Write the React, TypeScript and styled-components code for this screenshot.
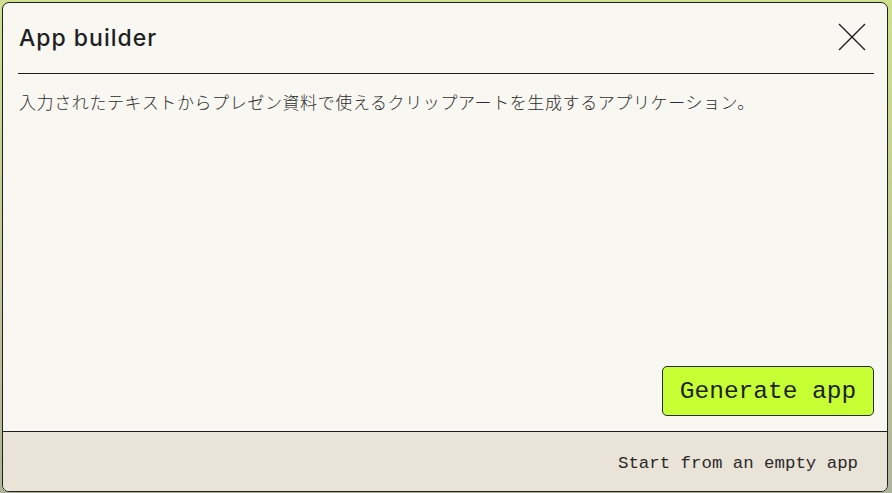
import React from "react";
import styled, { createGlobalStyle } from "styled-components";

const GlobalStyle = createGlobalStyle`
	html, body {
		margin: 0;
		padding: 0;
		background: #cfe08e;
		overflow: hidden;
	}
	* {
		box-sizing: border-box;
	}
`;

const PageSC = styled.div`
	width: 892px;
	height: 493px;
	padding: 2px 4px 0 2px;
	background: linear-gradient(#cfe08e, #aeb49a);
`;

const DialogSC = styled.div`
	width: 886px;
	height: 490px;
	display: flex;
	flex-direction: column;
	background: #f8f7f2;
	border: 1px solid #1f1f1f;
	border-radius: 7px;
	overflow: hidden;
`;

const HeaderSC = styled.div`
	height: 71px;
	margin: 0 13px 0 15px;
	display: flex;
	align-items: center;
	justify-content: space-between;
	border-bottom: 1px solid #1f1f1f;
`;

const TitleSC = styled.h2`
	margin: 0 0 0 1px;
	font-family: Inter, "Noto Sans", sans-serif;
	font-size: 23px;
	font-weight: 500;
	letter-spacing: 1px;
	color: #1f1f1f;
`;

const CloseSC = styled.button`
	width: 30px;
	height: 30px;
	margin: 0 7px 2px 0;
	padding: 0;
	border: none;
	background: none;
	display: flex;
	align-items: center;
	justify-content: center;
	cursor: pointer;
`;

const BodySC = styled.div`
	flex: 1;
	display: flex;
	flex-direction: column;
	justify-content: space-between;
	padding: 16px 13px 15px 16px;
	border-bottom: 1px solid #1f1f1f;
`;

const DescriptionSC = styled.p`
	margin: 0;
	font-family: "Noto Sans CJK JP", "Noto Sans", sans-serif;
	font-size: 17px;
	line-height: 24px;
	font-weight: 300;
	letter-spacing: 0.6px;
	color: #2e2e2e;
`;

const GenerateSC = styled.button`
	align-self: flex-end;
	width: 212px;
	height: 50px;
	background: #c6ff33;
	border: 1px solid #2a2a2a;
	border-radius: 5px;
	font-family: "Liberation Mono", "DejaVu Sans Mono", monospace;
	font-size: 24.5px;
	color: #1f1f1f;
	cursor: pointer;
`;

const FooterSC = styled.div`
	height: 59px;
	display: flex;
	align-items: center;
	justify-content: flex-end;
	padding: 4px 29px 0 0;
	background: #eae3d8;
`;

const EmptyAppSC = styled.button`
	padding: 0;
	border: none;
	background: none;
	font-family: "Liberation Mono", "DejaVu Sans Mono", monospace;
	font-size: 17.4px;
	color: #2a2a2a;
	cursor: pointer;
`;

const CloseIcon = () => (
	<svg width="30" height="30" viewBox="0 0 30 30" fill="none">
		<path d="M2 2L28 28M28 2L2 28" stroke="#1f1f1f" strokeWidth="1.4" />
	</svg>
);

const App = () => {
	return (
		<PageSC>
			<GlobalStyle />
			<DialogSC>
				<HeaderSC>
					<TitleSC>App builder</TitleSC>
					<CloseSC aria-label="Close">
						<CloseIcon />
					</CloseSC>
				</HeaderSC>
				<BodySC>
					<DescriptionSC>
						入力されたテキストからプレゼン資料で使えるクリップアートを生成するアプリケーション。
					</DescriptionSC>
					<GenerateSC>Generate app</GenerateSC>
				</BodySC>
				<FooterSC>
					<EmptyAppSC>Start from an empty app</EmptyAppSC>
				</FooterSC>
			</DialogSC>
		</PageSC>
	);
};

export default App;
